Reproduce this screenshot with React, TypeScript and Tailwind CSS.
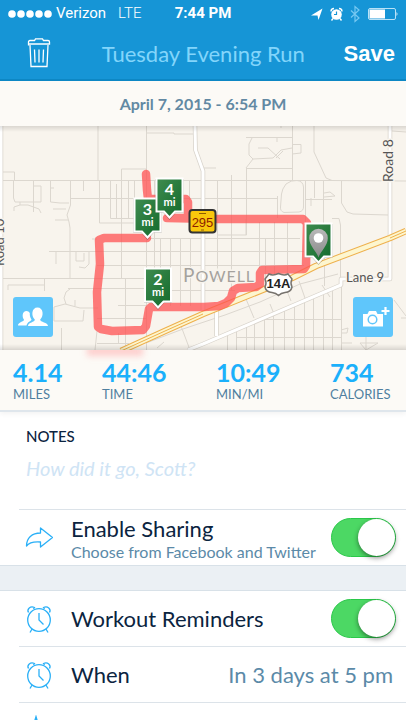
import React, { useState } from "react";

interface MileMarkerProps {
  x: number;
  y: number;
  mile?: number;
}

interface SwitchProps {
  id: string;
  checked: boolean;
  onChange: (checked: boolean) => void;
}

const STATS = [
  { value: "4.14", label: "MILES", className: "w-[89px]" },
  { value: "44:46", label: "TIME", className: "w-[114px]" },
  { value: "10:49", label: "MIN/MI", className: "w-[114px]" },
  { value: "734", label: "CALORIES", className: "" },
];

const ROUTE =
  "M146 174 L147 190 L148 199 L186 199 L188 202 L188 218 L167 218 L215 219 L303 219 L307 223 L306 266 L304 269 L262 270 L260 273 L260 284 L256 287 L238 288 L233 291 L231 298 L226 303 L219 306 L204 307 L151 307 L149 309 L146 326 L143 330 L112 331 L101 329 L98 327 L97 292 L100 264 L99 240 L104 238 L147 238";

const MINOR_ROADS = [
  "M0 180.5 H330 L406 181",
  "M98 126 V180 M146.500 126 V350 M146 133 H174 V134 H193",
  "M146 169 H121.500 V278 M2 172 H14.500 V180",
  "M13.500 180 V198 L15 202 H41 V186 H33 M33.500 180 V212",
  "M14 211 V207 L20 205 L28 205 L39 209 L41 213 M20 205 V202",
  "M50.500 180 V202 L60 203 H69 M51 188 H54 M53 209 H66 M55 220 H68 M83.500 180 V191",
  "M70.500 180 V205 L67 215 L69 222 L70 228 V278 M70 198.500 H278",
  "M99.500 180 V223 H146 M110.500 180 V218.500 H146 M116.500 184 V218 M128.500 180 V218 M134.500 180 V218 M154.500 180 V286 M189.500 180 V200",
  "M49 251.500 H146 M56 251 V264 M76 251 V261 H84 V253 M79 267 L85 268 L89 264 V251",
  "M92 239 H97 M97 265.500 H146 M0 278.500 H146 M8 290 V285 H44 M44.500 279 V291",
  "M125.500 278 V343 M68 288.500 H146 M66 304 L64 298 L66 292 L70 289 M54 307 L65 304 L80 308 H98 M54 307 V321 H83 L84 310 M118 305.500 H146 M75 306 V300",
  "M97 318.500 H146 M97 343.500 H129 M61.500 328 V350 M97 331 L95 350 M118.500 333 V343 M125.500 331 V350",
  "M146 251.500 H304 M146 265.500 H304 M146 290.500 H235 M146 238.500 H300 M160.500 238 V306 M170.500 238 V306 M180.500 238 V306 M190.500 238 V306",
  "M217.500 180 V280 M231.500 175 V290 M246.500 169 V235 H217 M246 168.500 H292 M246 168 L253 159",
  "M246 137.500 H292 M252 138 L249 144 V155 L253 159 L273 158 L281 150 L292 148 M258 148 H268 L280 159 M276 158 L283 151 M277 138 V142",
  "M292.500 126 V180 M292 144.500 H301 V153 L292 154 M281 126 V128",
  "M314 126 V152 L326 178 L332 180.500 M392 131 L406 132 M203 168 H216",
  "M286 184 Q291 180 297 180.500 Q303 181 303.500 187 V206 Q304 211 299 212 L284 212.500 Q280 211 280.500 207 L281.500 194 Q282 189 286 184 Z",
  "M277.500 196 V218 M305.500 180 V224 M314.500 180 V198 M305 199.500 H332 M311 198 V206 M323.500 180 V224 M324 193 L330 192 L335 196 L324 197",
  "M341.500 181 V203 L347 212 L353 214 L388 215 M332 218.500 H339 L340.500 225 V278",
  "M246 219 V235 M274.500 222 V284 M287.500 222 V284 M265.500 238 V280 M259.500 222 V268 M324.500 258 V286",
  "M146 343 L183 329 L225 315 L260 302 L300 284 L338 274 M246 299 L254 318 M299 281 L306 301 M181 326 L190 350 M270 304 L274 314 M287 291 L291 301 M157 348 L164 342",
  "M227.500 333 V350 M236.500 330 V350 M246.500 326 V350 M254.500 322 V350 M264.500 318 V350 M273.500 314 V350 M284.500 310 V350 M294.500 306 V350 M304.500 302 V350 M313.500 299 V350 M323.500 295 V350 M332.500 291 V350 M341.500 287 V350",
  "M255 319.500 H341 M236 337.500 H341 M322 285 L330 297 M341 330 L348 328 L347 333 L341 333 M342 343 H352 M360 343 H378 L366 350 L360 343 M366 335 V350 M394 300 L406 316 M401 318 H406",
];

const MileMarker: React.FC<MileMarkerProps> = ({ x, y, mile }) => (
  <g transform={`translate(${x} ${y})`}>
    <path d="M-14 1 H14 V35 H6 L0 42 L-6 35 H-14 Z" fill="#000" opacity="0.25" />
    <path
      d="M-13 0.500 H13 V33.500 H5.500 L0 39.500 L-5.500 33.500 H-13 Z"
      fill="url(#marker)"
      stroke="#fff"
      strokeWidth="2"
    />
    {mile ? (
      <g fill="#fff" textAnchor="middle" className="font-['Lato',sans-serif] font-bold">
        <text y="17" fontSize="16">{mile}</text>
        <text y="28" fontSize="11">mi</text>
      </g>
    ) : (
      <>
        <path
          d="M0 34.500 C-1.500 29 -9.300 23 -9.300 15 A9.300 9.300 0 0 1 9.300 15 C9.300 23 1.500 29 0 34.500 Z"
          fill="url(#pin)"
        />
        <circle cy="15" r="4.800" fill="#fff" />
      </>
    )}
  </g>
);

const RouteMap: React.FC = () => (
  <svg viewBox="0 126 406 224" className="block w-full" role="img" aria-label="Run route">
    <defs>
      <linearGradient id="marker" x1="0" y1="0" x2="1" y2="1">
        <stop offset="0" stopColor="#3f8c50" />
        <stop offset="1" stopColor="#136a2b" />
      </linearGradient>
      <linearGradient id="pin" x1="0" y1="0" x2="0" y2="1">
        <stop offset="0" stopColor="#b9b9b9" />
        <stop offset="1" stopColor="#898989" />
      </linearGradient>
      <linearGradient id="mapShade" x1="0" y1="0" x2="0" y2="1">
        <stop offset="0" stopColor="#000" stopOpacity="0.12" />
        <stop offset="1" stopColor="#000" stopOpacity="0" />
      </linearGradient>
    </defs>
    <rect y="126" width="406" height="224" fill="#f8f4ed" />

    <g fill="none" stroke="#dcd7cf" strokeWidth="1">
      {MINOR_ROADS.map((d) => (
        <path key={d} d={d} />
      ))}
    </g>

    <g fill="none" strokeLinejoin="round">
      <g stroke="#d8d3cb" strokeWidth="4.500">
        <path d="M195 126 L195.500 150 L203 171 V310" />
        <path d="M390 126 V279 H341 V285 L203 344 L188 350" />
        <path d="M216.500 310 V336 M1 126 V350" />
      </g>
      <g stroke="#fff" strokeWidth="3">
        <path d="M195 126 L195.500 150 L203 171 V310" />
        <path d="M390 126 V279 H341 V285 L203 344 L188 350" />
        <path d="M216.500 310 V336 M1 126 V350" />
      </g>
      <path d="M121 351 L165 331 L203 314 L292 278 L316 266 L390 238 L406 231" stroke="#eeb04c" strokeWidth="6.500" />
      <path d="M121 351 L165 331 L203 314 L292 278 L316 266 L390 238 L406 231" stroke="#fdf6cf" strokeWidth="4.500" />
      <path d="M121 351 L165 331 L203 314 M390 238 L406 231" stroke="#eeb04c" strokeWidth="1" />
    </g>

    <g
      fill="#555"
      stroke="#f8f4ed"
      strokeWidth="3"
      paintOrder="stroke"
      fontSize="13"
      className="font-['Lato',sans-serif]"
    >
      <text transform="translate(393 182) rotate(-90)" fontSize="14">Road 8</text>
      <text transform="translate(4 266) rotate(-90)">Road 10</text>
      <text x="346" y="282">Lane 9</text>
      <text x="183" y="282" fill="#a5a29d" fontSize="19" className="tracking-wider">
        P<tspan fontSize="16">OWELL</tspan>
      </text>
    </g>

    <path d={ROUTE} fill="none" stroke="#ff5252" strokeOpacity="0.75" strokeWidth="8.500" strokeLinejoin="round" strokeLinecap="round" />

    <rect x="189.500" y="210" width="26" height="22.500" rx="3" fill="#f9c70c" stroke="#333" strokeWidth="2" />
    <text x="202.500" y="227" textAnchor="middle" fontSize="13" fill="#8e1d00" className="font-['Liberation_Sans',sans-serif]">
      295
    </text>
    <path d="M199 213.500 H206 M201 230 H204" stroke="#8e5d00" strokeWidth="1" />

    <path
      d="M269 274 Q273 276 278.500 273.500 Q284 276 288 274 L292 279 Q290 283 292 287 Q291 292 285 292.500 Q281 293 278.500 295.500 Q276 293 272 292.500 Q266 292 265 287 Q267 283 265 279 Z"
      fill="#fff"
      stroke="#77736e"
      strokeWidth="1.500"
    />
    <text x="278.500" y="288" textAnchor="middle" fontSize="13" fill="#222" className="font-['Liberation_Sans_Narrow','Liberation_Sans',sans-serif] font-bold">
      14A
    </text>

    <MileMarker x={147.500} y={198} mile={3} />
    <MileMarker x={169.500} y={178} mile={4} />
    <MileMarker x={158} y={268} mile={2} />
    <MileMarker x={318.500} y={223} />
    <rect y="126" width="406" height="6" fill="url(#mapShade)" />
    <rect y="126" width="406" height="6" fill="url(#mapShade)" transform="translate(0 476) scale(1 -1)" />
  </svg>
);

const Switch: React.FC<SwitchProps> = ({ id, checked, onChange }) => (
  <input
    id={id}
    type="checkbox"
    role="switch"
    checked={checked}
    onChange={(e) => onChange(e.target.checked)}
    className="relative h-[39px] w-[65px] shrink-0 appearance-none rounded-full border border-gray-300 bg-gray-200 before:absolute before:top-0 before:left-0 before:size-[37px] before:rounded-full before:bg-white before:shadow-[0_2px_5px_rgba(0,0,0,0.45)] checked:border-[#2bc84a] checked:bg-[#4cd864] checked:before:left-[26px]"
  />
);

const AlarmIcon = () => (
  <svg viewBox="0 0 28 28" className="size-7" fill="none" stroke="#2bb0f7" strokeWidth="1.300" aria-hidden="true">
    <circle cx="14" cy="15" r="11.300" />
    <path d="M14 8 V15 L18.500 19.500" />
    <path d="M7 24 L5 27.500 M21 24 L23 27.500" />
    <path d="M3.500 7.500 C1.500 4 5.500 0.500 9.500 2.500 L8.500 4 M24.500 7.500 C26.500 4 22.500 0.500 18.500 2.500 L19.500 4" />
  </svg>
);

const ShareIcon = () => (
  <svg viewBox="0 0 28 28" className="size-7" fill="none" stroke="#2bb0f7" strokeWidth="1.300" strokeLinejoin="round" aria-hidden="true">
    <path d="M15.500 4 L27.500 13.500 L15.500 23 V18 C9 17.500 4 18.500 1.500 22 C1.500 14 7 9 15.500 9 Z" />
  </svg>
);

const StatusIcons = () => (
  <svg viewBox="0 0 90 20" className="h-5 w-[90px]" aria-hidden="true">
    <path d="M3 11.500 L14.500 4.500 L10.500 16 L9.500 11.500 Z" fill="#fff" />
    <circle cx="28.500" cy="10.500" r="5.300" fill="#fff" />
    <path d="M28.500 7.500 V10.500 H26" stroke="#1695d6" strokeWidth="1.200" fill="none" />
    <path d="M23 7.500 A3 3 0 0 1 26 4.500 M34 7.500 A3 3 0 0 0 31 4.500 M25 14.500 L23.500 16.500 M32 14.500 L33.500 16.500" stroke="#fff" strokeWidth="1.400" fill="none" />
    <path d="M43 6.500 L51 14 L47 17.500 V2.500 L51 6 L43 13.500" stroke="#76c8f2" strokeWidth="1.200" fill="none" />
    <rect x="60.500" y="4.500" width="27" height="11" rx="1.500" stroke="#b9e2f7" fill="none" />
    <rect x="61.500" y="5.500" width="15.500" height="9" fill="#fff" />
    <path d="M88.500 8 Q90.500 10 88.500 12 Z" fill="#d9effa" />
  </svg>
);

const ActivityPage: React.FC = () => {
  const [notes, setNotes] = useState("");
  const [sharing, setSharing] = useState(true);
  const [reminders, setReminders] = useState(true);

  return (
    <div className="flex h-screen flex-col overflow-hidden bg-white font-['Lato',sans-serif] text-[#0b2440]">
      <header className="shrink-0 border-b-2 border-[#0d87c4] bg-[#1695d6] text-white">
        <div className="grid h-[27px] grid-cols-[1fr_auto_1fr] items-center px-2 font-['Roboto',sans-serif] text-[15px]">
          <div className="flex items-center">
            <svg viewBox="0 0 44 8" className="mr-1 h-2 w-11" fill="#fff" aria-hidden="true">
              <circle cx="4" cy="4" r="3.800" />
              <circle cx="13" cy="4" r="3.800" />
              <circle cx="22" cy="4" r="3.800" />
              <circle cx="31" cy="4" r="3.800" />
              <circle cx="40" cy="4" r="3.800" />
            </svg>
            <span>Verizon</span>
            <span className="ml-3 font-light">LTE</span>
          </div>
          <span className="font-bold">7:44 PM</span>
          <div className="flex justify-end">
            <StatusIcons />
          </div>
        </div>
        <div className="flex h-[52px] items-center justify-between pr-[11px] pl-[27px]">
          <button type="button" aria-label="Delete run">
            <svg viewBox="0 0 24 30" className="h-[30px] w-6" fill="none" stroke="#fff" strokeWidth="1.300" aria-hidden="true">
              <path d="M1.500 7.500 V4 Q1.500 2.500 3 2.500 H7.500 L8.500 0.800 H15.500 L16.500 2.500 H21 Q22.500 2.500 22.500 4 V6 H1.500" />
              <path d="M3 7 L4 28.500 H20 L21 7" />
              <path d="M7.500 11.500 L8 24.500 M12 11.500 V24.500 M16.500 11.500 L16 24.500" />
            </svg>
          </button>
          <h1 className="pl-3 text-[22px] text-[#83d5fb]">Tuesday Evening Run</h1>
          <button type="button" className="font-['Liberation_Sans',sans-serif] text-[22px] font-bold">
            Save
          </button>
        </div>
      </header>

      <main className="flex-1 overflow-y-auto [scrollbar-width:none]">
        <p className="flex h-[45px] items-center justify-center bg-[#fcfaf6] text-[16px] font-bold text-[#6289a3]">
          April 7, 2015 - 6:54 PM
        </p>

        <section className="relative">
          <RouteMap />
          <button
            type="button"
            aria-label="Tag friends"
            className="absolute bottom-[13px] left-[13px] flex size-10 items-center justify-center rounded-[3px] bg-[#5fc6fb]"
          >
            <svg viewBox="0 0 30 20" className="h-5 w-[30px]" fill="#fff" aria-hidden="true">
              <path d="M0 18.500 C0 15 6 15 6 12.800 C3.800 10 4.200 4 8.500 4 C10 4 11 4.700 11.800 6 C11.500 9 12.500 11 13.500 12.500 C13 14.500 9.500 14.500 8.500 18.500 Z" />
              <path d="M10 19 C10 15 17 15.500 16.800 12.500 C13 9 13.500 0.500 19.500 0.500 C25.500 0.500 26 9 22.200 12.500 C22 15.500 30 15 30 19 Z" />
            </svg>
          </button>
          <button
            type="button"
            aria-label="Add photo"
            className="absolute right-[13px] bottom-[13px] flex size-10 items-center justify-center rounded-[3px] bg-[#5fc6fb]"
          >
            <svg viewBox="0 0 40 40" className="size-10" aria-hidden="true">
              <path d="M10 17 H14.500 L16 14 H23 L24.500 17 H30 V29.500 H10 Z" fill="#fff" />
              <circle cx="19.500" cy="22.500" r="4.300" fill="none" stroke="#5fc6fb" strokeWidth="1.500" />
              <path d="M32.500 10 V18 M28.500 14 H36.500" stroke="#fff" strokeWidth="2.200" />
            </svg>
          </button>
        </section>

        <section className="relative h-[62px] overflow-hidden border-b-2 border-[#dfe6ec] bg-[#fcfaf6] shadow-[0_2px_5px_rgba(0,0,0,0.05)]">
          <div className="absolute -top-1 left-[87px] h-2.5 w-14 bg-[#ffb3b3]/60 blur-[3px]" />
          <dl className="relative flex pt-2 pl-[13px]">
            {STATS.map((stat) => (
              <div key={stat.label} className={`flex flex-col-reverse ${stat.className}`}>
                <dt className="text-[13px] leading-4 text-[#4f7f9f]">{stat.label}</dt>
                <dd className="text-[25px] leading-7 font-bold text-[#1bb0fb]">{stat.value}</dd>
              </div>
            ))}
          </dl>
        </section>

        <section className="h-[97px] px-[26px] pt-3.5">
          <label htmlFor="notes" className="block text-[15px] leading-5 font-medium">
            NOTES
          </label>
          <textarea
            id="notes"
            rows={1}
            value={notes}
            onChange={(e) => setNotes(e.target.value)}
            placeholder="How did it go, Scott?"
            className="mt-2 block w-full resize-none text-[20px] leading-7 outline-none placeholder:text-[#cfe4f5] placeholder:italic"
          />
        </section>

        <section className="pl-[19px]">
          <div className="flex h-14 items-center border-t border-[#dce3e9] pr-[10px] pl-1.5">
            <ShareIcon />
            <label htmlFor="sharing" className="flex-1 pl-[18px]">
              <span className="block text-[22px] leading-7">Enable Sharing</span>
              <span className="block text-[16px] leading-[18px] text-[#5b8aa8]">Choose from Facebook and Twitter</span>
            </label>
            <Switch id="sharing" checked={sharing} onChange={setSharing} />
          </div>
        </section>

        <div className="h-[26px] border-y border-[#d8e1e8] bg-[#ebf0f4]" />

        <section className="pl-[19px]">
          <div className="flex h-[55px] items-center pr-[10px] pl-1.5">
            <AlarmIcon />
            <label htmlFor="reminders" className="flex-1 pl-[18px] text-[22px]">
              Workout Reminders
            </label>
            <Switch id="reminders" checked={reminders} onChange={setReminders} />
          </div>
          <div className="flex h-14 items-center border-t border-[#dce3e9] pr-[13px] pl-1.5 text-[22px]">
            <AlarmIcon />
            <span className="flex-1 pl-[18px]">When</span>
            <span className="text-[#5b8aa8]">In 3 days at 5 pm</span>
          </div>
          <div className="flex h-14 items-center border-t border-[#dce3e9] pl-px">
            <svg viewBox="0 0 32 32" className="size-8" fill="none" stroke="#2bb0f7" strokeWidth="1.500" aria-hidden="true">
              <path d="M16 2 L19 12 L31 12.500 L22.500 19.500 L25.500 30 L16 24 L6.500 30 L9.500 19.500 L1 12.500 L13 12 Z" />
            </svg>
          </div>
        </section>
      </main>
    </div>
  );
};

export default ActivityPage;
